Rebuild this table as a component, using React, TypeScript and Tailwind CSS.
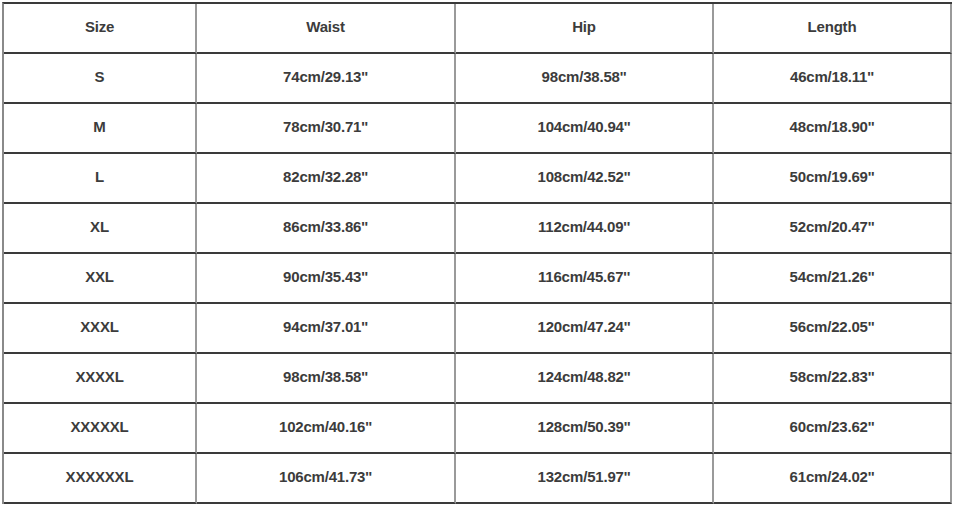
const head = ["Size", "Waist", "Hip", "Length"];

const rows = [
  ["S", "74cm/29.13''", "98cm/38.58''", "46cm/18.11''"],
  ["M", "78cm/30.71''", "104cm/40.94''", "48cm/18.90''"],
  ["L", "82cm/32.28''", "108cm/42.52''", "50cm/19.69''"],
  ["XL", "86cm/33.86''", "112cm/44.09''", "52cm/20.47''"],
  ["XXL", "90cm/35.43''", "116cm/45.67''", "54cm/21.26''"],
  ["XXXL", "94cm/37.01''", "120cm/47.24''", "56cm/22.05''"],
  ["XXXXL", "98cm/38.58''", "124cm/48.82''", "58cm/22.83''"],
  ["XXXXXL", "102cm/40.16''", "128cm/50.39''", "60cm/23.62''"],
  ["XXXXXXL", "106cm/41.73''", "132cm/51.97''", "61cm/24.02''"],
];

export default function App() {
  const all = [head, ...rows];
  return (
    <div className="w-[954px] h-[506px] bg-white pt-[2px] pl-[2px]">
      <div
        className="grid grid-cols-[193px_259px_258px_238px] border-t-2 border-l-2 border-t-[#3a3a3a] border-l-[#8a8a8a] w-[950px]"
        style={{ fontFamily: '"Liberation Sans", Arial, sans-serif' }}
      >
        {all.map((r, i) =>
          r.map((c, j) => (
            <div
              key={i + "-" + j}
              className="h-[50px] pb-[2px] flex items-center justify-center border-b-2 border-r-2 border-b-[#3a3a3a] border-r-[#9a9a9a] text-[15px] font-bold text-[#3c3c3c] tracking-[-0.2px]"
            >
              {c}
            </div>
          ))
        )}
      </div>
    </div>
  );
}
